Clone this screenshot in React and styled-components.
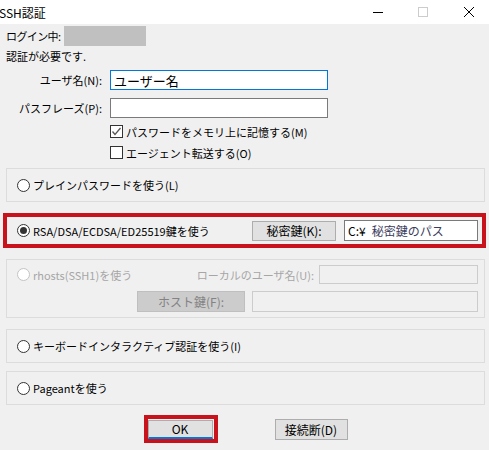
import React from "react";
import styled, { createGlobalStyle } from "styled-components";

const GlobalStyle = createGlobalStyle`
  html, body {
    margin: 0;
    padding: 0;
    background: #f0f0f0;
  }
`;

// whole dialog
const Dialog = styled.div`
  width: 489px;
  height: 450px;
  background: #f0f0f0;
  font-family: "Noto Sans CJK JP", "Noto Sans", sans-serif;
  font-size: 11px;
  color: #000;
  overflow: hidden;
`;

const TitleBar = styled.div`
  height: 24px;
  background: #fff;
  display: flex;
  align-items: center;
`;

const Title = styled.div`
  flex: 1;
  font-size: 12px;
  margin-left: -1px;
`;

const Controls = styled.div`
  display: flex;
  align-items: center;
  padding-right: 15px;
`;

const Control = styled.div`
  width: 10px;
  height: 10px;
  margin-left: ${(p) => p.gap || 0}px;
  display: flex;
`;

const Body = styled.div`
  padding: 0 4px 0 6px;
`;

const LoginRow = styled.div`
  margin-top: 2px;
  height: 20px;
  display: flex;
  align-items: center;
`;

const LoginLabel = styled.div`
  width: 58px;
  white-space: nowrap;
  letter-spacing: -0.6px;
`;

const Masked = styled.div`
  width: 82px;
  height: 20px;
  background: #c0c0c0;
`;

const Note = styled.div`
  height: 20px;
  display: flex;
  align-items: center;
`;

const FieldRow = styled.div`
  margin-top: ${(p) => p.top}px;
  display: flex;
  align-items: center;
`;

const FieldLabel = styled.div`
  width: 96px;
  text-align: right;
  margin-right: 8px;
`;

const TextBox = styled.div`
  box-sizing: border-box;
  width: ${(p) => p.w}px;
  height: ${(p) => p.h || 20}px;
  background: ${(p) => (p.disabled ? "#f0f0f0" : "#fff")};
  border: 1px solid
    ${(p) => (p.focused ? "#0078d7" : p.disabled ? "#cccccc" : "#7a7a7a")};
  font-size: ${(p) => p.size || 12}px;
  display: flex;
  align-items: center;
  padding-left: 3px;
  white-space: nowrap;
`;

const PathHint = styled.span`
  color: #3b3b5c;
  margin-left: 6px;
`;

const CheckRow = styled.label`
  margin-top: ${(p) => p.top}px;
  margin-left: 104px;
  height: 13px;
  display: flex;
  align-items: center;
  gap: 3px;
`;

const CheckBox = styled.span`
  box-sizing: border-box;
  width: 13px;
  height: 13px;
  border: 1px solid #333;
  background: #fff;
  display: flex;
  align-items: center;
  justify-content: center;
`;

const Group = styled.div`
  box-sizing: border-box;
  margin-top: ${(p) => p.top}px;
  width: 479px;
  height: ${(p) => p.h || 34}px;
  border: 1px solid #dcdcdc;
  padding: ${(p) => (p.stack ? "5px 6px 0 10px" : "0 6px 0 10px")};
  display: flex;
  flex-direction: ${(p) => (p.stack ? "column" : "row")};
  align-items: ${(p) => (p.stack ? "stretch" : "center")};
`;

// red highlight drawn over the selected group
const Highlight = styled.div`
  box-sizing: border-box;
  margin-top: ${(p) => p.top}px;
  margin-left: -3px;
  width: 483px;
  height: 35px;
  border: 4px solid #c8121c;
  padding: 0 4px 0 10px;
  display: flex;
  align-items: center;
`;

const Radio = styled.label`
  display: flex;
  align-items: center;
  gap: 3px;
  flex: 1;
  white-space: nowrap;
  color: ${(p) => (p.disabled ? "#a6a6a6" : "#000")};
`;

const RadioDot = styled.span`
  box-sizing: border-box;
  width: 13px;
  height: 13px;
  border-radius: 50%;
  border: 1px solid ${(p) => (p.disabled ? "#c4c4c4" : "#333")};
  background: #fff;
  display: flex;
  align-items: center;
  justify-content: center;
  &::after {
    content: "";
    width: 7px;
    height: 7px;
    border-radius: 50%;
    background: ${(p) => (p.checked ? "#333" : "transparent")};
  }
`;

const Button = styled.div`
  box-sizing: border-box;
  width: ${(p) => p.w}px;
  height: ${(p) => p.h || 20}px;
  background: ${(p) => (p.disabled ? "#cccccc" : "#e1e1e1")};
  border: 1px solid ${(p) => (p.disabled ? "#bfbfbf" : "#adadad")};
  border-bottom: ${(p) => (p.primary ? "2px solid #0078d7" : undefined)};
  color: ${(p) => (p.disabled ? "#838383" : "#000")};
  display: flex;
  align-items: center;
  justify-content: center;
  font-size: 12px;
  margin-right: ${(p) => p.mr || 0}px;
`;

const SubRow = styled.div`
  display: flex;
  align-items: center;
  margin-top: ${(p) => p.top || 0}px;
`;

const SubLabel = styled.div`
  color: #a6a6a6;
  margin-right: 5px;
`;

const Footer = styled.div`
  margin-top: 10px;
  display: flex;
  justify-content: center;
  align-items: center;
  gap: 57px;
`;

const DefaultFrame = styled.div`
  box-sizing: border-box;
  width: 74px;
  height: 28px;
  border: 4px solid #c8121c;
  display: flex;
  align-items: center;
  justify-content: center;
  padding-right: 1px;
`;

const Spacer = styled.div`
  flex: 1;
`;

export default function App() {
  return (
    <>
      <GlobalStyle />
      <Dialog>
        <TitleBar>
          <Title>SSH認証</Title>
          <Controls>
            <Control>
              <svg width="10" height="10" viewBox="0 0 10 10">
                <line x1="0" y1="5.5" x2="10" y2="5.5" stroke="#000" strokeWidth="1" />
              </svg>
            </Control>
            <Control gap={35}>
              <svg width="10" height="10" viewBox="0 0 10 10">
                <rect x="0.5" y="0.5" width="9" height="9" fill="none" stroke="#cccccc" />
              </svg>
            </Control>
            <Control gap={36}>
              <svg width="10" height="10" viewBox="0 0 10 10">
                <path d="M0 0 L10 10 M10 0 L0 10" stroke="#000" strokeWidth="1" />
              </svg>
            </Control>
          </Controls>
        </TitleBar>

        <Body>
          <LoginRow>
            <LoginLabel>ログイン中:</LoginLabel>
            <Masked />
          </LoginRow>
          <Note>認証が必要です.</Note>

          <FieldRow top={4}>
            <FieldLabel>ユーザ名(N):</FieldLabel>
            <TextBox w={218} focused size={13}>
              ユーザー名
            </TextBox>
          </FieldRow>
          <FieldRow top={8}>
            <FieldLabel>パスフレーズ(P):</FieldLabel>
            <TextBox w={218} />
          </FieldRow>

          <CheckRow top={7}>
            <CheckBox>
              <svg width="11" height="11" viewBox="0 0 11 11">
                <path d="M1.5 5.5 L4 8.5 L9.5 2" fill="none" stroke="#555" strokeWidth="1.3" />
              </svg>
            </CheckBox>
            パスワードをメモリ上に記憶する(M)
          </CheckRow>
          <CheckRow top={8}>
            <CheckBox />
            エージェント転送する(O)
          </CheckRow>

          <Group top={9}>
            <Radio>
              <RadioDot />
              プレインパスワードを使う(L)
            </Radio>
          </Group>

          <Highlight top={11}>
            <Radio>
              <RadioDot checked />
              RSA/DSA/ECDSA/ED25519鍵を使う
            </Radio>
            <Button w={84} mr={8}>
              秘密鍵(K):
            </Button>
            <TextBox w={134} h={21}>
              C:¥<PathHint>秘密鍵のパス</PathHint>
            </TextBox>
          </Highlight>

          <Group top={11} h={59} stack>
            <SubRow>
              <Radio disabled>
                <RadioDot disabled />
                rhosts(SSH1)を使う
              </Radio>
              <SubLabel>ローカルのユーザ名(U):</SubLabel>
              <TextBox w={159} h={19} disabled />
            </SubRow>
            <SubRow top={7}>
              <Spacer />
              <Button w={108} h={21} mr={7} disabled>
                ホスト鍵(F):
              </Button>
              <TextBox w={226} h={21} disabled />
            </SubRow>
          </Group>

          <Group top={11}>
            <Radio>
              <RadioDot />
              キーボードインタラクティブ認証を使う(I)
            </Radio>
          </Group>

          <Group top={8}>
            <Radio>
              <RadioDot />
              Pageantを使う
            </Radio>
          </Group>

          <Footer>
            <DefaultFrame>
              <Button w={65} h={19} primary>
                OK
              </Button>
            </DefaultFrame>
            <Button w={73} h={21}>
              接続断(D)
            </Button>
          </Footer>
        </Body>
      </Dialog>
    </>
  );
}
